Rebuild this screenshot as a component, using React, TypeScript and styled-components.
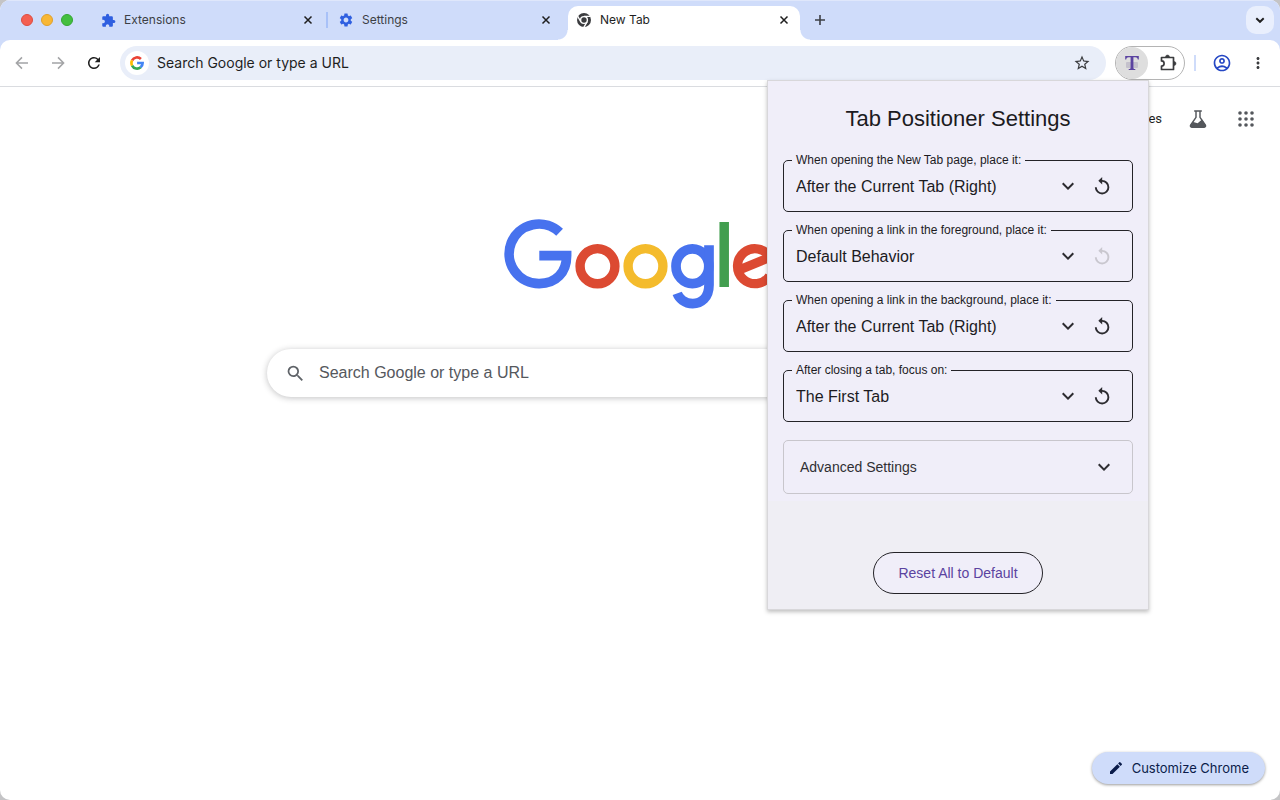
import React, { useId, useState } from "react";
import styled, { createGlobalStyle } from "styled-components";
import {
  MdEdit,
  MdExpandMore,
  MdExtension,
  MdMoreVert,
  MdOutlineAccountCircle,
  MdRefresh,
  MdSearch,
  MdSettings,
  MdStarBorder,
} from "react-icons/md";

const GlobalStyle = createGlobalStyle`
  *, *::before, *::after { box-sizing: border-box; }
  body {
    margin: 0;
    background: #c4c4c6;
    font-family: Inter, "Liberation Sans", sans-serif;
    color: #1f1f1f;
  }
  button, input, select { font: inherit; color: inherit; }
`;

const Window = styled.div`
  position: relative;
  display: flex;
  flex-direction: column;
  min-height: 100vh;
  border-radius: 10px;
  overflow: hidden;
  background: #fff;
`;

/* Tab strip */

const TabStrip = styled.div`
  display: flex;
  align-items: flex-end;
  height: 50px;
  margin-bottom: -10px;
  padding: 0 6px 10px 0;
  background: #cfdcfa;
  box-shadow: inset 0 1px 0 #dfe7fb;
`;

const TrafficLights = styled.div`
  display: flex;
  align-items: center;
  gap: 8px;
  height: 40px;
  padding: 0 15px 0 21px;
`;

const Light = styled.button<{ $fill: string; $edge: string }>`
  width: 12px;
  height: 12px;
  padding: 0;
  border: 1px solid ${(p) => p.$edge};
  border-radius: 50%;
  background: ${(p) => p.$fill};
`;

const Tabs = styled.div`
  display: flex;
  align-items: flex-end;
  min-width: 0;
`;

const TabBox = styled.div<{ $active?: boolean; $divided?: boolean }>`
  position: relative;
  display: flex;
  align-items: center;
  flex: 0 1 ${(p) => (p.$active ? 232 : 238)}px;
  width: ${(p) => (p.$active ? 232 : 238)}px;
  height: 34px;
  margin-left: ${(p) => (p.$active ? 4 : 0)}px;
  padding: ${(p) => (p.$active ? "0 8px 6px" : "0 10px 6px 12px")};
  border-radius: 10px 10px 0 0;
  background: ${(p) => (p.$active ? "#fff" : "transparent")};
  color: ${(p) => (p.$active ? "#1f1f1f" : "#3c3f45")};

  &::before {
    content: "";
    display: ${(p) => (p.$divided || p.$active ? "block" : "none")};
    position: absolute;
    ${(p) =>
      p.$active
        ? `left: -10px; bottom: 0; width: 10px; height: 10px;
           background: radial-gradient(circle at 0 0, transparent 9px, #fff 10px);`
        : `left: 0; top: 6px; width: 2px; height: 16px; background: #a8c1f8;`}
  }

  &::after {
    content: "";
    display: ${(p) => (p.$active ? "block" : "none")};
    position: absolute;
    right: -10px;
    bottom: 0;
    width: 10px;
    height: 10px;
    background: radial-gradient(circle at 100% 0, transparent 9px, #fff 10px);
  }
`;

const TabLabel = styled.button`
  display: flex;
  align-items: center;
  flex: 1;
  gap: 8px;
  min-width: 0;
  padding: 0;
  border: 0;
  background: none;
  font-size: 12px;
  line-height: 16px;
  text-align: left;
  white-space: nowrap;
`;

const TabIcon = styled.span`
  display: flex;
  align-items: center;
  justify-content: center;
  flex: none;
  width: 16px;
  height: 16px;
`;

const PlainButton = styled.button<{ $size: number; $color?: string }>`
  display: inline-flex;
  align-items: center;
  justify-content: center;
  flex: none;
  width: ${(p) => p.$size}px;
  height: ${(p) => p.$size}px;
  padding: 0;
  border: 0;
  border-radius: 50%;
  background: none;
  color: ${(p) => p.$color ?? "#1f1f1f"};
`;

const NewTabSlot = styled.div`
  display: flex;
  align-items: center;
  height: 40px;
  margin-left: 6px;
`;

const TabSearch = styled(PlainButton)`
  margin: 0 0 6px auto;
  border-radius: 10px;
  background: #e9effd;
`;

/* Toolbar */

const Toolbar = styled.div`
  position: relative;
  display: flex;
  align-items: center;
  height: 47px;
  padding: 0 4px;
  border-bottom: 1px solid #dadce0;
  border-radius: 10px 10px 0 0;
  background: #fff;
`;

const NavButton = styled(PlainButton)`
  width: 36px;
  height: 32px;
`;

const Omnibox = styled.div`
  display: flex;
  align-items: center;
  flex: 1;
  min-width: 0;
  height: 34px;
  margin: 0 9px 0 8px;
  padding: 0 12px 0 5px;
  border-radius: 17px;
  background: #e9eef9;
`;

const SiteBadge = styled.span`
  display: flex;
  align-items: center;
  justify-content: center;
  flex: none;
  width: 24px;
  height: 24px;
  margin-right: 8px;
  border-radius: 50%;
  background: #fff;
`;

const OmniInput = styled.input`
  flex: 1;
  min-width: 0;
  padding: 0;
  border: 0;
  outline: 0;
  background: none;
  font-size: 14px;
  line-height: 20px;

  &::placeholder { color: #1f1f1f; opacity: 1; }
`;

const ExtensionPill = styled.div`
  display: flex;
  flex: none;
  width: 70px;
  height: 34px;
  border: 1px solid #b4b4b4;
  border-radius: 17px;
`;

const ExtensionButton = styled(PlainButton)`
  background: #dedede;
`;

const ToolbarDivider = styled.span`
  flex: none;
  width: 2px;
  height: 16px;
  margin: 0 8px 0 9px;
  background: #cfdcfa;
`;

/* New tab page */

const Page = styled.main`
  display: flex;
  flex-direction: column;
  align-items: center;
  flex: 1;
`;

const PageHeader = styled.header`
  display: flex;
  align-items: center;
  justify-content: flex-end;
  align-self: stretch;
  height: 64px;
  padding-right: 22px;
`;

const HeaderLink = styled.a`
  margin-left: 15px;
  font-family: Roboto, sans-serif;
  font-size: 13px;
  line-height: 24px;
  color: #1f1f1f;
  text-decoration: none;
`;

const HeaderIcon = styled(PlainButton)`
  margin-left: 24px;
`;

const Logo = styled.svg`
  display: block;
  margin: 68px 0 38px;
`;

const SearchBox = styled.label`
  display: flex;
  align-items: center;
  gap: 13px;
  width: calc(100% - 40px);
  max-width: 746px;
  height: 48px;
  padding: 0 18px;
  border-radius: 24px;
  background: #fff;
  color: #5f6368;
  box-shadow: 0 1px 6px rgba(32, 33, 36, 0.28);
`;

const SearchInput = styled.input`
  flex: 1;
  min-width: 0;
  padding: 0;
  border: 0;
  outline: 0;
  background: none;
  font-family: "Liberation Sans", Arial, sans-serif;
  font-size: 16px;
  line-height: 24px;

  &::placeholder { color: #55585d; opacity: 1; }
`;

const PageFooter = styled.footer`
  display: flex;
  justify-content: flex-end;
  align-self: stretch;
  margin-top: auto;
  padding: 16px 15px;
`;

const CustomizeButton = styled.button`
  display: flex;
  align-items: center;
  gap: 8px;
  height: 32px;
  padding: 0 16px;
  border: 0;
  border-radius: 16px;
  background: #cfdcfa;
  box-shadow: 0 1px 3px rgba(0, 0, 0, 0.4);
  color: #0b1c4a;
  font-size: 13px;
  line-height: 20px;
  white-space: nowrap;
`;

/* Extension popup */

const Popup = styled.section`
  position: absolute;
  top: 80px;
  right: 131px;
  width: 382px;
  border: 1px solid #d8d7da;
  background: #efeef4;
  box-shadow: 0 2px 4px rgba(0, 0, 0, 0.25);
  color: #1c1b1f;
  font-family: "Liberation Sans", Arial, sans-serif;
`;

const PopupBody = styled.div`
  display: flex;
  flex-direction: column;
  gap: 11px;
  padding: 23px 15px 7px;
  background: #f0eef9;
`;

const PopupTitle = styled.h1`
  margin: 0 0 8px;
  font-size: 22px;
  font-weight: 400;
  line-height: 30px;
  text-align: center;
`;

const Field = styled.fieldset`
  min-width: 0;
  margin: 0;
  padding: 0 18px 7px 8px;
  border: 1px solid #242328;
  border-radius: 5px;
`;

const Legend = styled.legend`
  padding: 0 4px;
  font-size: 12px;
  line-height: 15px;
`;

const FieldRow = styled.div`
  display: flex;
  align-items: center;
  height: 36px;
`;

const SelectWrap = styled.div`
  display: grid;
  grid-template-columns: 1fr 24px;
  align-items: center;
  flex: 1;
  margin-right: 10px;

  svg {
    grid-area: 1 / 2;
    pointer-events: none;
  }
`;

const Select = styled.select`
  grid-area: 1 / 1 / 2 / 3;
  width: 100%;
  padding: 2px 24px 0 4px;
  border: 0;
  outline: 0;
  appearance: none;
  background: transparent;
  font-size: 16px;
  line-height: 24px;
`;

const AdvancedButton = styled.button`
  display: flex;
  align-items: center;
  justify-content: space-between;
  height: 54px;
  margin-top: 7px;
  padding: 0 16px;
  border: 1px solid #c8c6cc;
  border-radius: 5px;
  background: none;
  font-size: 14px;
  line-height: 20px;
  color: #2f2e33;
`;

const PopupFooter = styled.div`
  display: flex;
  justify-content: center;
  padding: 51px 15px 15px;
`;

const ResetAllButton = styled.button`
  width: 170px;
  height: 42px;
  padding: 0;
  border: 1px solid #242328;
  border-radius: 21px;
  background: #f0eef9;
  color: #5b43a0;
  font-size: 14px;
  line-height: 20px;
`;

/* Drawings */

const CloseIcon = () => (
  <svg width="10" height="10" viewBox="0 0 10 10" stroke="currentColor" strokeWidth="1.5" fill="none" aria-hidden>
    <path d="M1.5 1.5l7 7M8.5 1.5l-7 7" />
  </svg>
);

const PlusIcon = () => (
  <svg width="12" height="12" viewBox="0 0 12 12" stroke="#3c3f45" strokeWidth="1.6" aria-hidden>
    <path d="M6 1v10M1 6h10" />
  </svg>
);

const ChevronIcon = () => (
  <svg width="10" height="10" viewBox="0 0 10 10" stroke="#1f1f1f" strokeWidth="1.9" fill="none" aria-hidden>
    <path d="M1.300 3.200L5 6.800l3.700-3.600" />
  </svg>
);

const ArrowIcon = ({ forward = false }: { forward?: boolean }) => (
  <svg width="14" height="14" viewBox="0 0 14 14" stroke="currentColor" strokeWidth="1.5" fill="none" aria-hidden>
    <path d={forward ? "M1 7h11.4M7 1.4L12.6 7 7 12.6" : "M13 7H1.6M7 1.4L1.4 7 7 12.6"} />
  </svg>
);

const ResetIcon = () => (
  <svg width="24" height="24" viewBox="0 0 24 24" fill="none" aria-hidden>
    <path d="M5.800 13.200A6.300 6.300 0 1 0 12.100 6.900H10.500" stroke="currentColor" strokeWidth="1.9" />
    <path d="M8.300 6.800L12.200 3v7.600z" fill="currentColor" />
  </svg>
);

const ChromeIcon = () => (
  <svg width="16" height="16" viewBox="0 0 16 16" aria-hidden>
    <circle cx="8" cy="8" r="7" fill="#3b3c3f" />
    <path d="M8 4.400h6.600M4.900 9.800L1.600 4.200M11.100 9.800L7.800 15.400" stroke="#fff" strokeWidth="1.3" />
    <circle cx="8" cy="8" r="4.100" fill="#fff" />
    <circle cx="8" cy="8" r="2.700" fill="#3b3c3f" />
  </svg>
);

const GoogleG = () => (
  <svg width="14" height="14" viewBox="0 0 14 14" fill="none" strokeWidth="2.7" aria-hidden>
    <path d="M2.1 4.4A5.6 5.6 0 0 1 10.9 3" stroke="#ea4335" />
    <path d="M2.1 9.6A5.6 5.6 0 0 1 2.1 4.4" stroke="#fbbc05" />
    <path d="M10.7 11.3A5.6 5.6 0 0 1 2.1 9.6" stroke="#34a853" />
    <path d="M7.1 7h5.5A5.6 5.6 0 0 1 10.6 11.3" stroke="#4285f4" />
  </svg>
);

const PositionerIcon = () => (
  <svg width="16" height="18" viewBox="0 0 16 18" aria-hidden>
    <rect x="2" y="8" width="12" height="6" rx="1" fill="#c4c1cc" />
    <path
      d="M1.200 2h13.600v3.600h-1c-.3-1.700-.9-2.400-2.400-2.400H9.400v10.600c0 .9.400 1.200 1.900 1.300V16H4.700v-.9c1.500-.1 1.900-.4 1.900-1.300V3.200H4.600c-1.500 0-2.100.7-2.400 2.400h-1z"
      fill="#5b43a0"
    />
  </svg>
);

const PuzzleIcon = () => (
  <svg width="22" height="22" viewBox="0 0 22 22" fill="none" stroke="#3b3c3f" strokeWidth="1.7" strokeLinejoin="round" aria-hidden>
    <path d="M6.500 5.500h12v12h-12v-3.400a2.600 2.600 0 0 0 0-5.200z" />
    <path d="M10.500 5a2 2 0 0 1 4 0zM19 9.500a2 2 0 0 1 0 4z" fill="#3b3c3f" strokeWidth="0.5" />
  </svg>
);

const FlaskIcon = () => (
  <svg width="20" height="20" viewBox="0 0 22 22" aria-hidden>
    <path
      d="M6.800 2.300h8.400M8.800 2.500v6.700L3 17.600c-.8 1.300-.2 2.400 1.200 2.400h13.600c1.400 0 2-1.100 1.200-2.400L13.200 9.200V2.500"
      fill="none"
      stroke="#54575c"
      strokeWidth="1.600"
    />
    <path d="M5.800 14.200l4.800 1.600 4.800-4.300 4 6.300c.6 1.200.2 2.200-1.600 2.200H4.200c-1.800 0-2.200-1-1.600-2z" fill="#54575c" />
  </svg>
);

const AppsIcon = () => (
  <svg width="18" height="18" viewBox="0 0 18 18" fill="#54575c" aria-hidden>
    {[3, 9, 15].map((y) => [3, 9, 15].map((x) => <circle key={`${x}-${y}`} cx={x} cy={y} r="1.8" />))}
  </svg>
);

const GoogleLogo = () => (
  <Logo width="272" height="92" viewBox="0 0 272 92" fill="none" role="img" aria-label="Google">
    <g stroke="#4772ee" strokeWidth="9.7">
      <path d="M55.600 13.300A29.800 29.800 0 1 0 35.300 64.600C52 64.600 62.600 53.500 62.600 36.700H35.300" />
      <ellipse cx="188.400" cy="47.200" rx="16.400" ry="17.400" />
      <path d="M205 26.300V66C205 79 197 84.600 188.700 84.600C180.500 84.600 175 79.300 173.200 74.400" />
    </g>
    <ellipse cx="93.500" cy="47.200" rx="17.400" ry="17.600" stroke="#dc4a32" strokeWidth="9.400" />
    <ellipse cx="141.500" cy="47.200" rx="17.400" ry="17.600" stroke="#f4bb2c" strokeWidth="9.400" />
    <path d="M220.200 3v65" stroke="#429e4f" strokeWidth="9.500" />
    <path d="M265.500 57A17.500 17.500 0 1 1 266 38.200L237.500 50" stroke="#dc4a32" strokeWidth="9.200" />
  </Logo>
);

const PLACEMENTS = [
  "Default Behavior",
  "After the Current Tab (Right)",
  "Before the Current Tab (Left)",
  "At the Start",
  "At the End",
];
const FOCUS = ["Default Behavior", "The First Tab", "The Last Tab"];

function SettingField({ label, options, initial }: { label: string; options: string[]; initial: string }) {
  const id = useId();
  const [value, setValue] = useState(initial);
  const isDefault = value === options[0];
  return (
    <Field>
      <Legend>
        <label htmlFor={id}>{label}</label>
      </Legend>
      <FieldRow>
        <SelectWrap>
          <Select id={id} value={value} onChange={(e) => setValue(e.target.value)}>
            {options.map((o) => (
              <option key={o}>{o}</option>
            ))}
          </Select>
          <MdExpandMore size={24} color="#2c2b30" />
        </SelectWrap>
        <PlainButton
          $size={24}
          $color={isDefault ? "#c9c7cf" : "#2c2b30"}
          disabled={isDefault}
          aria-label="Reset to default"
          onClick={() => setValue(options[0])}
        >
          <ResetIcon />
        </PlainButton>
      </FieldRow>
    </Field>
  );
}

function Tab({ icon, title, active, divided }: { icon: React.ReactNode; title: string; active?: boolean; divided?: boolean }) {
  return (
    <TabBox $active={active} $divided={divided}>
      <TabLabel>
        <TabIcon>{icon}</TabIcon>
        {title}
      </TabLabel>
      <PlainButton $size={16} aria-label={`Close ${title}`}>
        <CloseIcon />
      </PlainButton>
    </TabBox>
  );
}

export default function App() {
  return (
    <>
      <GlobalStyle />
      <Window>
        <TabStrip>
          <TrafficLights>
            <Light $fill="#f45f51" $edge="#dd4c40" aria-label="Close window" />
            <Light $fill="#f8b735" $edge="#dfa02b" aria-label="Minimize window" />
            <Light $fill="#43bf3f" $edge="#35a632" aria-label="Zoom window" />
          </TrafficLights>
          <Tabs>
            <Tab icon={<MdExtension size={15} color="#2f5fe0" />} title="Extensions" />
            <Tab icon={<MdSettings size={16} color="#2f5fe0" />} title="Settings" divided />
            <Tab icon={<ChromeIcon />} title="New Tab" active />
          </Tabs>
          <NewTabSlot>
            <PlainButton $size={28} aria-label="New tab">
              <PlusIcon />
            </PlainButton>
          </NewTabSlot>
          <TabSearch $size={28} aria-label="Search tabs">
            <ChevronIcon />
          </TabSearch>
        </TabStrip>

        <Toolbar>
          <NavButton $size={36} $color="#a3a4a6" aria-label="Back">
            <ArrowIcon />
          </NavButton>
          <NavButton $size={36} $color="#a3a4a6" aria-label="Forward">
            <ArrowIcon forward />
          </NavButton>
          <NavButton $size={36} aria-label="Reload">
            <MdRefresh size={18} />
          </NavButton>
          <Omnibox>
            <SiteBadge>
              <GoogleG />
            </SiteBadge>
            <OmniInput aria-label="Address bar" placeholder="Search Google or type a URL" />
            <PlainButton $size={24} $color="#3b3c3f" aria-label="Bookmark this tab">
              <MdStarBorder size={18} />
            </PlainButton>
          </Omnibox>
          <ExtensionPill>
            <ExtensionButton $size={32} aria-label="Tab Positioner">
              <PositionerIcon />
            </ExtensionButton>
            <NavButton $size={36} aria-label="Extensions">
              <PuzzleIcon />
            </NavButton>
          </ExtensionPill>
          <ToolbarDivider />
          <NavButton $size={36} $color="#2547c4" aria-label="Profile">
            <MdOutlineAccountCircle size={20} />
          </NavButton>
          <NavButton $size={36} $color="#3b3c3f" aria-label="Menu">
            <MdMoreVert size={18} />
          </NavButton>
        </Toolbar>

        <Page>
          <PageHeader>
            <HeaderLink href="#gmail">Gmail</HeaderLink>
            <HeaderLink href="#images">Images</HeaderLink>
            <HeaderIcon $size={24} aria-label="Search Labs">
              <FlaskIcon />
            </HeaderIcon>
            <HeaderIcon $size={24} aria-label="Google apps">
              <AppsIcon />
            </HeaderIcon>
          </PageHeader>
          <GoogleLogo />
          <SearchBox>
            <MdSearch size={21} />
            <SearchInput aria-label="Search" placeholder="Search Google or type a URL" />
          </SearchBox>
          <PageFooter>
            <CustomizeButton>
              <MdEdit size={16} />
              Customize Chrome
            </CustomizeButton>
          </PageFooter>
        </Page>

        <Popup>
          <PopupBody>
            <PopupTitle>Tab Positioner Settings</PopupTitle>
            <SettingField
              label="When opening the New Tab page, place it:"
              options={PLACEMENTS}
              initial="After the Current Tab (Right)"
            />
            <SettingField
              label="When opening a link in the foreground, place it:"
              options={PLACEMENTS}
              initial="Default Behavior"
            />
            <SettingField
              label="When opening a link in the background, place it:"
              options={PLACEMENTS}
              initial="After the Current Tab (Right)"
            />
            <SettingField label="After closing a tab, focus on:" options={FOCUS} initial="The First Tab" />
            <AdvancedButton>
              Advanced Settings
              <MdExpandMore size={24} />
            </AdvancedButton>
          </PopupBody>
          <PopupFooter>
            <ResetAllButton>Reset All to Default</ResetAllButton>
          </PopupFooter>
        </Popup>
      </Window>
    </>
  );
}
